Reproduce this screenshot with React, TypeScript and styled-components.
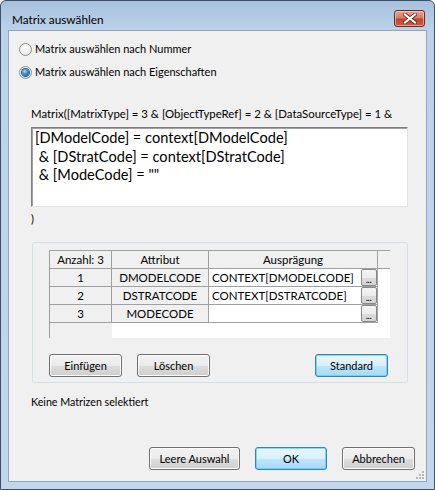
import React from "react";
import styled, { createGlobalStyle, css } from "styled-components";

const Global = createGlobalStyle`
  html, body { margin: 0; padding: 0; background: #ffffff; }
  body { width: 435px; height: 490px; overflow: hidden; }
  * { box-sizing: border-box; }
`;

const UI_FONT = `Lato, "Noto Sans", "Liberation Sans", sans-serif`;

const Window = styled.div`
  width: 435px;
  height: 490px;
  display: flex;
  flex-direction: column;
  border: 1px solid #3d4f66;
  border-radius: 6px 6px 0 0;
  background: linear-gradient(180deg, #a7c1dd 0px, #bcd2ea 30px, #c2d7ee 100%);
  padding: 0 7px 7px 7px;
  font-family: ${UI_FONT};
  font-size: 11px;
  color: #000;
`;

const TitleBar = styled.div`
  height: 29px;
  display: flex;
  align-items: flex-start;
  justify-content: space-between;
  padding: 0 2px 0 4px;
`;

const Title = styled.div`
  font-size: 11.8px;
  line-height: 16px;
  margin-top: 11px;
  color: #000;
`;

const CloseButton = styled.div`
  width: 31px;
  height: 17px;
  margin-top: 9px;
  border: 1px solid #6b2b25;
  border-radius: 3px;
  background: linear-gradient(180deg, #e8a493 0%, #d77a66 45%, #c4452c 55%, #d0583e 100%);
  box-shadow: inset 0 0 0 1px rgba(255, 220, 210, 0.55);
  display: flex;
  align-items: center;
  justify-content: center;
`;

const Client = styled.div`
  flex: 1;
  background: #f0f0f0;
  border: 1px solid #8fa6c1;
  display: flex;
  flex-direction: column;
  padding: 0 0 0 10px;
  position: relative;
`;

const RadioGroup = styled.div`
  display: flex;
  flex-direction: column;
  gap: 9px;
  margin-top: 11px;
`;

const RadioRow = styled.label`
  display: flex;
  align-items: center;
  gap: 3px;
  height: 14px;
  line-height: 14px;
  font-size: 11px;
`;

const RadioCircle = styled.span<{ $checked?: boolean }>`
  width: 13px;
  height: 13px;
  border-radius: 50%;
  border: 1px solid #8c8f92;
  background: radial-gradient(circle at 40% 35%, #ffffff 0%, #f3f3f3 45%, #d8d8d8 100%);
  display: inline-flex;
  align-items: center;
  justify-content: center;
  ${(p) =>
    p.$checked &&
    css`
      &::after {
        content: "";
        width: 7px;
        height: 7px;
        border-radius: 50%;
        background: radial-gradient(circle at 40% 35%, #9fe0ff 0%, #2d8fd8 45%, #0d4f8f 100%);
        box-shadow: 0 0 0 1px #2a5a8a;
      }
    `}
`;

const Section = styled.div`
  padding-left: 12px;
  display: flex;
  flex-direction: column;
`;

const ExprLabel = styled.div`
  margin-top: 28px;
  font-size: 11.4px;
  line-height: 14px;
  height: 14px;
  white-space: nowrap;
`;

const ExprBox = styled.div`
  margin-top: 6px;
  width: 377px;
  height: 80px;
  background: #fff;
  border: 1px solid;
  border-color: #808080 #e3e3e3 #e3e3e3 #808080;
  box-shadow: inset 1px 1px 0 #a0a0a0;
  padding: 1px 3px;
  font-size: 14.6px;
  line-height: 18.5px;
  white-space: pre;
`;

const CloseParen = styled.div`
  margin-top: 5px;
  font-size: 11px;
  line-height: 14px;
`;

const Panel = styled.div`
  margin-top: 16px;
  margin-left: 1px;
  width: 376px;
  height: 141px;
  border: 1px solid #d5dfe5;
  border-radius: 3px;
  padding: 7px 0 0 16px;
  display: flex;
  flex-direction: column;
`;

const Grid = styled.table`
  border-collapse: collapse;
  table-layout: fixed;
  width: 340px;
  height: 88px;
  background: #fff;
  border-top: 1px solid #a0a0a0;
  border-left: 1px solid #a0a0a0;
  font-size: 11.5px;
`;

const HeadCell = styled.th<{ $filler?: boolean }>`
  height: 18px;
  padding: 0;
  font-weight: normal;
  background: #f0f0f0;
  border-right: ${(p) => (p.$filler ? "none" : "1px solid #a0a0a0")};
  border-bottom: 1px solid #a0a0a0;
  text-align: center;
  line-height: 16px;
  white-space: nowrap;
`;

const RowHead = styled.td`
  height: 18px;
  padding: 0;
  background: #f0f0f0;
  border-right: 1px solid #a0a0a0;
  border-bottom: 1px solid #a0a0a0;
  text-align: center;
  line-height: 16px;
  white-space: nowrap;
`;

const ValueCell = styled.td`
  height: 18px;
  padding: 0 0 0 3px;
  background: #fff;
  border-bottom: 1px solid #a0a0a0;
  text-align: left;
  line-height: 16px;
  white-space: nowrap;
  overflow: hidden;
`;

const BtnCell = styled.td`
  padding: 0;
  height: 18px;
  border-right: 1px solid #a0a0a0;
  border-bottom: 1px solid #a0a0a0;
  vertical-align: middle;
`;

const FillCell = styled.td<{ $gray?: boolean }>`
  padding: 0;
  background: ${(p) => (p.$gray ? "#f0f0f0" : "#fff")};
`;

const DotsButton = styled.div`
  width: 16px;
  height: 17px;
  margin-left: 1px;
  border: 1px solid #8a8a8a;
  border-radius: 2px;
  background: linear-gradient(180deg, #f4f4f4 0%, #ececec 50%, #dcdcdc 51%, #d4d4d4 100%);
  font-size: 10px;
  line-height: 18px;
  text-align: center;
  letter-spacing: -0.5px;
`;

const ButtonRow = styled.div`
  display: flex;
  align-items: center;
  margin-top: 16px;
  width: 340px;
`;

const Button = styled.div<{ $default?: boolean; $w: number; $ml?: number; $h?: number }>`
  width: ${(p) => p.$w}px;
  height: ${(p) => p.$h ?? 23}px;
  margin-left: ${(p) => p.$ml ?? 0}px;
  border: 1px solid ${(p) => (p.$default ? "#3c7fb1" : "#707070")};
  border-radius: 3px;
  background: ${(p) =>
    p.$default
      ? "linear-gradient(180deg, #eaf6fd 0%, #d9f0fc 50%, #bee6fd 51%, #a7d9f5 100%)"
      : "linear-gradient(180deg, #f2f2f2 0%, #ebebeb 50%, #dddddd 51%, #cfcfcf 100%)"};
  box-shadow: inset 0 0 0 1px ${(p) => (p.$default ? "#48d2f8aa" : "#fcfcfc")};
  display: flex;
  align-items: center;
  justify-content: center;
  font-size: 11px;
  white-space: nowrap;
`;

const Status = styled.div`
  margin-top: 12px;
  font-size: 10.7px;
  line-height: 14px;
`;

const Footer = styled.div`
  margin-top: auto;
  margin-bottom: 11px;
  display: flex;
  justify-content: flex-end;
  padding-right: 11px;
  gap: 15px;
`;

const Grip = styled.svg`
  position: absolute;
  right: 1px;
  bottom: 1px;
`;

const ROWS = [
  ["1", "DMODELCODE", "CONTEXT[DMODELCODE]"],
  ["2", "DSTRATCODE", "CONTEXT[DSTRATCODE]"],
  ["3", "MODECODE", ""],
];

export default function App() {
  return (
    <>
      <Global />
      <Window>
        <TitleBar>
          <Title>Matrix auswählen</Title>
          <CloseButton>
            <svg width="14" height="11" viewBox="0 0 14 11">
              <path
                d="M2 1.5 L12 9.5 M12 1.5 L2 9.5"
                stroke="#5a1d14"
                strokeWidth="3.6"
                strokeLinecap="square"
              />
              <path
                d="M2 1.5 L12 9.5 M12 1.5 L2 9.5"
                stroke="#ffffff"
                strokeWidth="2.2"
                strokeLinecap="square"
              />
            </svg>
          </CloseButton>
        </TitleBar>
        <Client>
          <RadioGroup>
            <RadioRow>
              <RadioCircle />
              <span>Matrix auswählen nach Nummer</span>
            </RadioRow>
            <RadioRow>
              <RadioCircle $checked />
              <span>Matrix auswählen nach Eigenschaften</span>
            </RadioRow>
          </RadioGroup>
          <Section>
            <ExprLabel>
              Matrix([MatrixType] = 3 &amp; [ObjectTypeRef] = 2 &amp; [DataSourceType] = 1 &amp;
            </ExprLabel>
            <ExprBox>
              {"[DModelCode] = context[DModelCode]\n & [DStratCode] = context[DStratCode]\n & [ModeCode] = \"\""}
            </ExprBox>
            <CloseParen>)</CloseParen>
            <Panel>
              <Grid>
                <colgroup>
                  <col style={{ width: 62 }} />
                  <col style={{ width: 97 }} />
                  <col style={{ width: 151 }} />
                  <col style={{ width: 18 }} />
                  <col style={{ width: 12 }} />
                </colgroup>
                <thead>
                  <tr>
                    <HeadCell>Anzahl: 3</HeadCell>
                    <HeadCell>Attribut</HeadCell>
                    <HeadCell colSpan={2}>Ausprägung</HeadCell>
                    <HeadCell $filler />
                  </tr>
                </thead>
                <tbody>
                  {ROWS.map(([n, a, v]) => (
                    <tr key={n}>
                      <RowHead>{n}</RowHead>
                      <RowHead>{a}</RowHead>
                      <ValueCell>{v}</ValueCell>
                      <BtnCell>
                        <DotsButton>...</DotsButton>
                      </BtnCell>
                      <FillCell />
                    </tr>
                  ))}
                  <tr>
                    <FillCell $gray />
                    <FillCell colSpan={4} />
                  </tr>
                </tbody>
              </Grid>
              <ButtonRow>
                <Button $w={73}>Einfügen</Button>
                <Button $w={73} $ml={15}>
                  Löschen
                </Button>
                <Button $w={73} $ml={105} $default>
                  Standard
                </Button>
              </ButtonRow>
            </Panel>
            <Status>Keine Matrizen selektiert</Status>
          </Section>
          <Footer>
            <Button $w={91}>Leere Auswahl</Button>
            <Button $w={72} $default>
              OK
            </Button>
            <Button $w={73}>Abbrechen</Button>
          </Footer>
          <Grip width="10" height="10" viewBox="0 0 10 10">
            {[
              [8, 2],
              [8, 5],
              [5, 5],
              [8, 8],
              [5, 8],
              [2, 8],
            ].map(([x, y]) => (
              <rect key={`${x}-${y}`} x={x - 1} y={y - 1} width="2" height="2" fill="#b8b8b8" />
            ))}
          </Grip>
        </Client>
      </Window>
    </>
  );
}
